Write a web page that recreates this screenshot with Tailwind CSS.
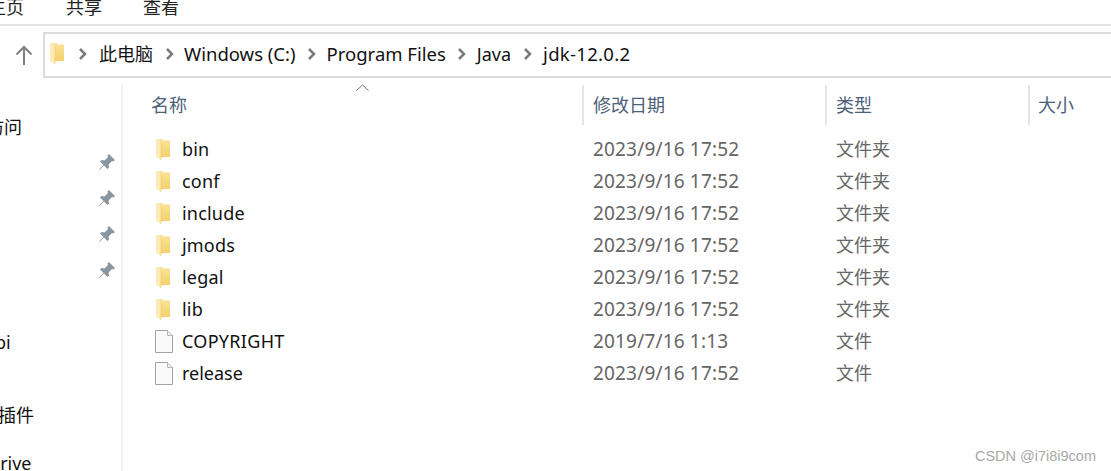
<!DOCTYPE html>
<html lang="en">
  <head>
    <meta charset="UTF-8" />
    <title>jdk-12.0.2</title>
    <script src="https://cdn.jsdelivr.net/npm/@tailwindcss/browser@4"></script>
  </head>
  <body class="bg-white overflow-hidden">
    <!-- Shared icons -->
    <svg width="0" height="0" class="absolute">
      <defs>
        <linearGradient id="folder-back" x1="0" y1="0" x2="0" y2="1">
          <stop offset="0" stop-color="#fae49a" />
          <stop offset="1" stop-color="#f5d06c" />
        </linearGradient>
        <symbol id="folder" viewBox="0 0 14 21">
          <path d="M0 0h6.500l1 1.500H14V18H4V2L0 0z" fill="url(#folder-back)" />
          <path d="M0 0l5 2.500V21l-5-3z" fill="#fcebb6" />
          <path d="M5 2.500V21" stroke="#eec566" stroke-width=".6" />
        </symbol>
        <symbol id="chevron" viewBox="0 0 8 12">
          <path d="M1 1l5 5-5 5" fill="none" stroke="#7a7a7a" stroke-width="2.500" />
        </symbol>
        <symbol id="pin" viewBox="0 0 18 18">
          <path d="M11 1l6 6-1.500 1.500L14 8l-3.500 3.500.500 3L9.500 16 6 12.500 1.500 17 1 16.500 5.500 12 2 8.500 3.500 7l3 .500L10 4l-.500-1.500z" fill="#8b959d" />
        </symbol>
        <symbol id="file" viewBox="0 0 18 23">
          <path d="M.5.500h12l5 5v17H.5z" fill="#fafafa" stroke="#a3a3a3" />
          <path d="M12.500.500v5h5" fill="#ececec" stroke="#b5b5b5" />
        </symbol>
      </defs>
    </svg>

    <div class="w-[1111px] h-[471px] relative overflow-hidden flex flex-col text-[18px] leading-[24px] text-[#111] font-['Noto_Sans','Noto_Sans_CJK_SC',sans-serif]">
      <!-- Ribbon tabs -->
      <div class="h-[26px] shrink-0 border-b-2 border-[#e3e3e3] relative">
        <div class="absolute left-[-12px] top-[-5px] flex text-[#222]">
          <span class="w-[78px]">主页</span>
          <span class="w-[77px]">共享</span>
          <span>查看</span>
        </div>
      </div>

      <!-- Address bar -->
      <div class="h-[58px] shrink-0 flex items-center">
        <div class="w-[43px] flex justify-center pl-[5px]">
          <svg width="18" height="20" viewBox="0 0 18 20" fill="none" stroke="#7f7f7f" stroke-width="2"><path d="M9 20V2M1.500 9.500L9 2l7.500 7.500" /></svg>
        </div>
        <div class="flex-1 h-[46px] border-2 border-r-0 border-[#dcdcdc] flex items-center pl-[5px] pb-[3px] text-[18.5px]">
          <svg width="14" height="21" class="mr-[15px]"><use href="#folder" /></svg>
          <svg width="8" height="12" class="mr-[12px]"><use href="#chevron" /></svg>
          <span class="mr-[13px] text-[18px]">此电脑</span>
          <svg width="8" height="12" class="mr-[10px]"><use href="#chevron" /></svg>
          <span class="mr-[12px]">Windows (C:)</span>
          <svg width="8" height="12" class="mr-[11px]"><use href="#chevron" /></svg>
          <span class="mr-[12px]">Program Files</span>
          <svg width="8" height="12" class="mr-[11px]"><use href="#chevron" /></svg>
          <span class="mr-[13px] text-[18px]">Java</span>
          <svg width="8" height="12" class="mr-[11px]"><use href="#chevron" /></svg>
          <span class="tracking-[0.3px]">jdk-12.0.2</span>
        </div>
      </div>

      <div class="flex-1 flex">
        <!-- Navigation pane, cut off at the window's left edge -->
        <div class="w-[123px] shrink-0 border-r-2 border-[#f3f3f3] relative">
          <span class="absolute left-[-14px] top-[31px]">访问</span>
          <span class="absolute left-[-5px] top-[246px]">pi</span>
          <span class="absolute left-[-2px] top-[319px]">插件</span>
          <span class="absolute left-[-13px] top-[367px]">Drive</span>
          <svg class="absolute left-[98px] top-[69px]" width="18" height="18"><use href="#pin" /></svg>
          <svg class="absolute left-[98px] top-[105px]" width="18" height="18"><use href="#pin" /></svg>
          <svg class="absolute left-[98px] top-[141px]" width="18" height="18"><use href="#pin" /></svg>
          <svg class="absolute left-[98px] top-[177px]" width="18" height="18"><use href="#pin" /></svg>
        </div>

        <!-- File list -->
        <div class="flex-1 relative">
          <svg class="absolute left-[233px] top-[0px]" width="13" height="7" viewBox="0 0 13 7" fill="none" stroke="#777"><path d="M.5 6.500l6-5.500 6 5.500" /></svg>
          <div class="h-[41px] flex items-center text-[#4c607a]">
            <div class="w-[459px] pl-[28px]">名称</div>
            <div class="w-[243px] h-[40px] border-l-2 border-[#e5e5e5] pl-[9px] flex items-center">修改日期</div>
            <div class="w-[203px] h-[40px] border-l-2 border-[#e5e5e5] pl-[9px] flex items-center">类型</div>
            <div class="h-[40px] border-l-2 border-[#e5e5e5] pl-[8px] flex items-center">大小</div>
          </div>
          <div class="pt-[8px]">
            <div class="h-[32px] flex items-center">
              <div class="w-[460px] pl-[33px] flex items-center gap-[12px] tracking-[0.2px]"><svg width="14" height="21"><use href="#folder" /></svg>bin</div>
              <div class="w-[243px] pl-[10px] text-[#666] text-[19px] tracking-[0.17px]">2023/9/16 17:52</div>
              <div class="pl-[10px] text-[#666]">文件夹</div>
            </div>
            <div class="h-[32px] flex items-center">
              <div class="w-[460px] pl-[33px] flex items-center gap-[12px] tracking-[0.2px]"><svg width="14" height="21"><use href="#folder" /></svg>conf</div>
              <div class="w-[243px] pl-[10px] text-[#666] text-[19px] tracking-[0.17px]">2023/9/16 17:52</div>
              <div class="pl-[10px] text-[#666]">文件夹</div>
            </div>
            <div class="h-[32px] flex items-center">
              <div class="w-[460px] pl-[33px] flex items-center gap-[12px] tracking-[0.2px]"><svg width="14" height="21"><use href="#folder" /></svg>include</div>
              <div class="w-[243px] pl-[10px] text-[#666] text-[19px] tracking-[0.17px]">2023/9/16 17:52</div>
              <div class="pl-[10px] text-[#666]">文件夹</div>
            </div>
            <div class="h-[32px] flex items-center">
              <div class="w-[460px] pl-[33px] flex items-center gap-[12px] tracking-[0.2px]"><svg width="14" height="21"><use href="#folder" /></svg>jmods</div>
              <div class="w-[243px] pl-[10px] text-[#666] text-[19px] tracking-[0.17px]">2023/9/16 17:52</div>
              <div class="pl-[10px] text-[#666]">文件夹</div>
            </div>
            <div class="h-[32px] flex items-center">
              <div class="w-[460px] pl-[33px] flex items-center gap-[12px] tracking-[0.2px]"><svg width="14" height="21"><use href="#folder" /></svg>legal</div>
              <div class="w-[243px] pl-[10px] text-[#666] text-[19px] tracking-[0.17px]">2023/9/16 17:52</div>
              <div class="pl-[10px] text-[#666]">文件夹</div>
            </div>
            <div class="h-[32px] flex items-center">
              <div class="w-[460px] pl-[33px] flex items-center gap-[12px] tracking-[0.2px]"><svg width="14" height="21"><use href="#folder" /></svg>lib</div>
              <div class="w-[243px] pl-[10px] text-[#666] text-[19px] tracking-[0.17px]">2023/9/16 17:52</div>
              <div class="pl-[10px] text-[#666]">文件夹</div>
            </div>
            <div class="h-[32px] flex items-center">
              <div class="w-[460px] pl-[32px] flex items-center gap-[9px] tracking-[0.3px]"><svg width="18" height="23"><use href="#file" /></svg>COPYRIGHT</div>
              <div class="w-[243px] pl-[10px] text-[#666] text-[19px] tracking-[0.17px]">2019/7/16 1:13</div>
              <div class="pl-[10px] text-[#666]">文件</div>
            </div>
            <div class="h-[32px] flex items-center">
              <div class="w-[460px] pl-[32px] flex items-center gap-[9px]"><svg width="18" height="23"><use href="#file" /></svg>release</div>
              <div class="w-[243px] pl-[10px] text-[#666] text-[19px] tracking-[0.17px]">2023/9/16 17:52</div>
              <div class="pl-[10px] text-[#666]">文件</div>
            </div>
          </div>
        </div>
      </div>

      <!-- Watermark -->
      <span class="absolute right-[15px] top-[447px] text-[14.5px] leading-[18px] text-[#a8a8a8] font-['Liberation_Sans',sans-serif]">CSDN @i7i8i9com</span>
    </div>
  </body>
</html>
